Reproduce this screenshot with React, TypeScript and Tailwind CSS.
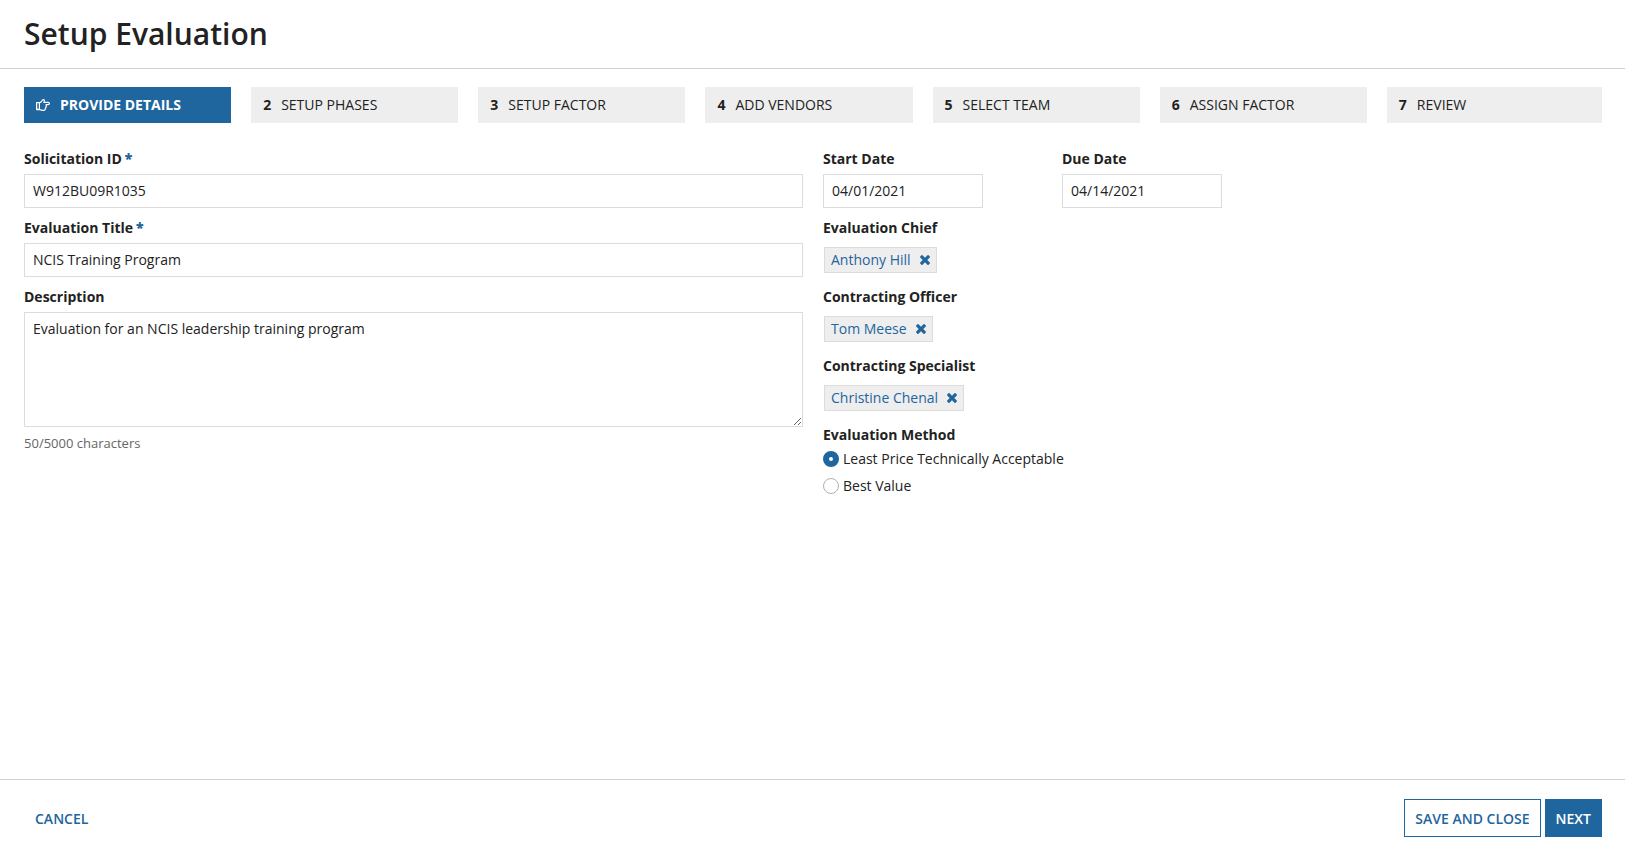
import { useState } from 'react';

const STEPS = [
    'Provide Details',
    'Setup Phases',
    'Setup Factor',
    'Add Vendors',
    'Select Team',
    'Assign Factor',
    'Review',
];

const ROLES = [
    { label: 'Evaluation Chief', person: 'Anthony Hill' },
    { label: 'Contracting Officer', person: 'Tom Meese' },
    { label: 'Contracting Specialist', person: 'Christine Chenal' },
];

const METHODS = ['Least Price Technically Acceptable', 'Best Value'];

const MAX_DESCRIPTION = 5000;

const FIELD = 'block border border-[#dcdcdc] bg-white px-2 text-sm text-[#222]';

function HandIcon() {
    return (
        <svg
            viewBox="0 0 14 12"
            className="h-3 w-3.5"
            fill="none"
            stroke="currentColor"
            strokeWidth="1.2"
            strokeLinejoin="round"
            aria-hidden="true"
        >
            <path d="M.6 3.700h2.800v6.900H.6z" />
            <path d="M3.400 3.700C4.500 3.700 5.100 3 5.700 2.100 6.200 1.200 6.400.6 7.300.6c1.300 0 1.400 1.300.5 2.700H12.200c1.600 0 1.600 2.300 0 2.300H10c.6.6.5 1.500-.1 1.900.3.700.1 1.500-.6 1.800.1 1.300-.5 2-1.600 2H6.500C5.200 11.300 4.400 10.600 3.400 10.600" />
            <path d="M1.500 9.300h.6" />
        </svg>
    );
}

function TimesIcon() {
    return (
        <svg viewBox="302 366 1190 1190" className="h-2.5 w-2.5" fill="currentColor" aria-hidden="true">
            <path d="M1490 1322q0 40-28 68l-136 136q-28 28-68 28t-68-28l-294-294-294 294q-28 28-68 28t-68-28l-136-136q-28-28-28-68t28-68l294-294-294-294q-28-28-28-68t28-68l136-136q28-28 68-28t68 28l294 294 294-294q28-28 68-28t68 28l136 136q28 28 28 68t-28 68l-294 294 294 294q28 28 28 68z" />
        </svg>
    );
}

function Label({ htmlFor, required, children }: { htmlFor: string; required?: boolean; children: string }) {
    return (
        <label htmlFor={htmlFor} className="flex gap-[3px] pb-[5px] text-sm leading-5 font-bold">
            {children}
            {required && <span className="font-extrabold text-[#1f659e]">*</span>}
        </label>
    );
}

function StepList() {
    return (
        <ol className="flex gap-5">
            {STEPS.map((step, i) => (
                <li key={step} className="flex-1 last:grow last:basis-2">
                    <button
                        type="button"
                        aria-current={i === 0 ? 'step' : undefined}
                        className="flex h-9 w-full items-center gap-2.5 bg-[#eee] px-3 text-sm whitespace-nowrap uppercase aria-[current=step]:bg-[#1f659e] aria-[current=step]:font-bold aria-[current=step]:text-white"
                    >
                        {i === 0 ? <HandIcon /> : <span className="font-bold">{i + 1}</span>}
                        {step}
                    </button>
                </li>
            ))}
        </ol>
    );
}

export default function App() {
    const [description, setDescription] = useState('Evaluation for an NCIS leadership training program');
    const [method, setMethod] = useState(METHODS[0]);

    return (
        <form className="flex min-h-screen flex-col bg-white font-['Open_Sans',sans-serif] text-[#222]">
            <header className="border-b border-[#d0d0d0] px-6 py-3">
                <h1 className="text-[30px] leading-11 font-semibold">Setup Evaluation</h1>
            </header>

            <main className="flex-1 pt-[18px] pr-[23px] pl-6">
                <StepList />

                <div className="grid grid-cols-2 gap-5 pt-[26px]">
                    <div>
                        <div className="pb-[10px]">
                            <Label htmlFor="solicitation" required>Solicitation ID</Label>
                            <input id="solicitation" defaultValue="W912BU09R1035" className={`${FIELD} h-[34px] w-full pb-0.5`} />
                        </div>
                        <div className="pb-[10px]">
                            <Label htmlFor="title" required>Evaluation Title</Label>
                            <input id="title" defaultValue="NCIS Training Program" className={`${FIELD} h-[34px] w-full pb-0.5`} />
                        </div>
                        <Label htmlFor="description">Description</Label>
                        <textarea
                            id="description"
                            value={description}
                            maxLength={MAX_DESCRIPTION}
                            onChange={(e) => setDescription(e.target.value)}
                            className={`${FIELD} h-[115px] w-full py-1.5`}
                        />
                        <p className="pt-1.5 text-[13px] leading-5 text-[#666]">
                            {description.length}/{MAX_DESCRIPTION} characters
                        </p>
                    </div>

                    <div>
                        <div className="flex gap-[79px] pb-[10px]">
                            <div>
                                <Label htmlFor="start">Start Date</Label>
                                <input id="start" defaultValue="04/01/2021" className={`${FIELD} h-[34px] w-40 pb-0.5`} />
                            </div>
                            <div>
                                <Label htmlFor="due">Due Date</Label>
                                <input id="due" defaultValue="04/14/2021" className={`${FIELD} h-[34px] w-40 pb-0.5`} />
                            </div>
                        </div>

                        {ROLES.map(({ label, person }) => (
                            <div key={label} className="pb-[14px]">
                                <h2 className="text-sm leading-5 font-bold">{label}</h2>
                                <div className="ml-px flex pt-[9px]">
                                    <span className="flex h-[26px] items-center gap-[9px] border border-[#dcdcdc] bg-[#eee] px-1.5 text-sm text-[#1f659e]">
                                        <a href="#">{person}</a>
                                        <button type="button" aria-label={`Remove ${person}`}>
                                            <TimesIcon />
                                        </button>
                                    </span>
                                </div>
                            </div>
                        ))}

                        <fieldset>
                            <legend className="text-sm leading-5 font-bold">Evaluation Method</legend>
                            {METHODS.map((name) => (
                                <label key={name} className="flex h-[27px] items-center gap-1 text-sm">
                                    <input
                                        type="radio"
                                        name="method"
                                        checked={method === name}
                                        onChange={() => setMethod(name)}
                                        className="h-4 w-4 appearance-none rounded-full border border-[#b0b0b0] bg-white checked:border-6 checked:border-[#1f659e]"
                                    />
                                    {name}
                                </label>
                            ))}
                        </fieldset>
                    </div>
                </div>
            </main>

            <footer className="flex justify-between border-t border-[#d0d0d0] px-[23px] pt-[19px] pb-4">
                <button type="button" className="h-[38px] px-3 pt-0.5 text-sm font-semibold text-[#1f659e]">
                    CANCEL
                </button>
                <div className="flex gap-1">
                    <button type="button" className="h-[38px] border border-[#1f659e] px-2.5 pt-0.5 text-sm font-semibold text-[#1f659e]">
                        SAVE AND CLOSE
                    </button>
                    <button type="submit" className="h-[38px] border border-[#1f659e] bg-[#1f659e] px-2.5 pt-0.5 text-sm font-semibold text-white">
                        NEXT
                    </button>
                </div>
            </footer>
        </form>
    );
}
